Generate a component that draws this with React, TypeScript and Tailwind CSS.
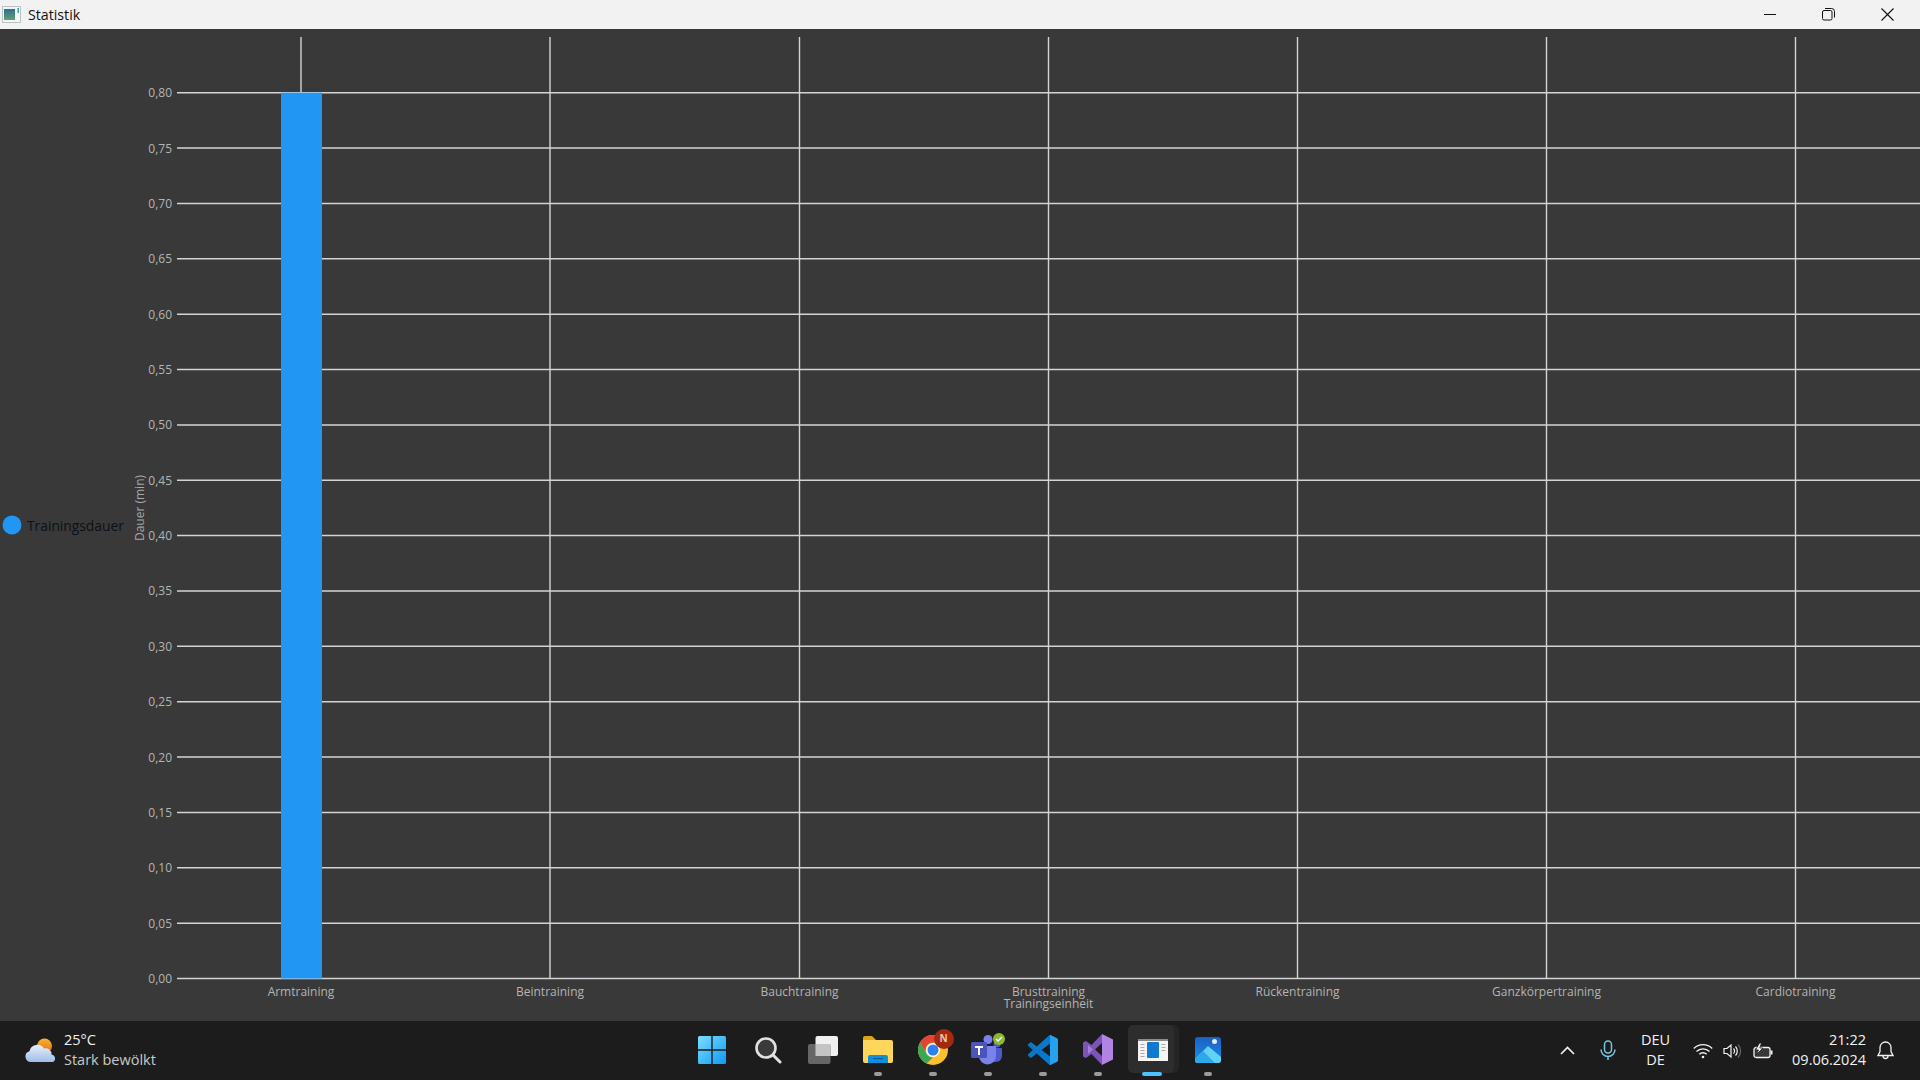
const font = "font-['Open_Sans','Noto_Sans',sans-serif]";

const ticks = ["0,00","0,05","0,10","0,15","0,20","0,25","0,30","0,35","0,40","0,45","0,50","0,55","0,60","0,65","0,70","0,75","0,80"];
const cats: [string, number][] = [["Armtraining",301],["Beintraining",550],["Bauchtraining",799.5],["Brusttraining",1048.5],["Rückentraining",1297.5],["Ganzkörpertraining",1546.5],["Cardiotraining",1795.5]];
const TOP = 29;
const y0 = 978.5 - TOP;
const step = 55.36;

function Chart() {
  return (
    <div className="relative flex-1 bg-[#393939]">
      <svg width="1920" height="992" className="block" style={{fontFamily:"'Open Sans'"}}>
        {cats.map(([, x]) => (
          <line key={x} x1={x} x2={x} y1={8} y2={y0} stroke="#d4d4d4" strokeWidth="1.4" />
        ))}
        {ticks.map((t, i) => {
          const y = y0 - i * step;
          return (
            <g key={t}>
              <line x1={177} x2={1920} y1={y} y2={y} stroke="#d4d4d4" strokeWidth="1.5" />
              <text x={172} y={y + 4.5} textAnchor="end" fontSize="12" fill="#b4b4b4">{t}</text>
            </g>
          );
        })}
        <rect x={281} y={y0 - 16 * step} width={41} height={16 * step} fill="#2196f3" />
        {cats.map(([c, x]) => (
          <text key={c} x={x} y={967} textAnchor="middle" fontSize="12" fill="#b4b4b4">{c}</text>
        ))}
        <text x={1048.5} y={979} textAnchor="middle" fontSize="12" fill="#b4b4b4">Trainingseinheit</text>
        <text transform="translate(144 479) rotate(-90)" textAnchor="middle" fontSize="12" fill="#a8a8a8">Dauer (min)</text>
        <circle cx={12} cy={496} r={9.5} fill="#2196f3" />
        <text x={27} y={502} fontSize="13.8" fill="#0c1117">Trainingsdauer</text>
      </svg>
    </div>
  );
}

function TitleBar() {
  return (
    <div className="flex h-[29px] items-center bg-[#f2f2f2] pl-[2px] pr-[3px]">
      <svg width="19" height="17" viewBox="0 0 19 17">
        <rect x="0.5" y="0.5" width="18" height="16" fill="#f4f6f6" stroke="#b9c3c8" />
        <defs>
          <linearGradient id="tb" x1="0" y1="0" x2="0" y2="1"><stop offset="0" stopColor="#2f6f8c" /><stop offset="1" stopColor="#5f9e74" /></linearGradient>
        </defs>
        <rect x="2" y="3" width="11" height="11" fill="url(#tb)" />
        <rect x="15.5" y="2" width="1.5" height="5" fill="#3aa0b0" />
      </svg>
      <span className={`ml-[7px] text-[14.2px] text-[#111] ${font}`}>Statistik</span>
      <div className="ml-auto flex">
        <div className="flex h-[29px] w-[58px] items-center justify-center">
          <svg width="12" height="2"><rect width="12" height="1" fill="#111" /></svg>
        </div>
        <div className="flex h-[29px] w-[59px] items-center justify-center">
          <svg width="13" height="13" viewBox="0 0 13 13" fill="none" stroke="#111" strokeWidth="1">
            <rect x="0.5" y="2.5" width="9.5" height="9.5" rx="1.5" />
            <path d="M3 .5h6.5A3 3 0 0 1 12.5 3.5V9.5" />
          </svg>
        </div>
        <div className="flex h-[29px] w-[59px] items-center justify-center">
          <svg width="13" height="13" viewBox="0 0 13 13" stroke="#111" strokeWidth="1.1"><path d="M.5.5l12 12M12.5.5l-12 12" /></svg>
        </div>
      </div>
    </div>
  );
}

function Slot({ children, dot, active }: { children: React.ReactNode; dot?: boolean; active?: boolean }) {
  return (
    <div className="relative flex h-[59px] w-[55px] items-center justify-center">
      {active && (
        <>
          <div className="absolute left-[8px] top-[4px] h-[48px] w-[46px] rounded-[5px] bg-[#252525]" />
          <div className="absolute left-[3px] top-[4px] h-[48px] w-[46px] rounded-[5px] bg-[#2d2d2d]" />
        </>
      )}
      <div className="relative -mt-[2px] flex">{children}</div>
      {dot && <div className="absolute bottom-[4px] left-[24px] h-[4px] w-[8px] rounded-full bg-[#9b9b9b]" />}
      {active && <div className="absolute bottom-[4px] left-[17px] h-[4px] w-[20px] rounded-full bg-[#4cc2ff]" />}
    </div>
  );
}

const Start = () => (
  <svg className="-ml-[2px]" width="30" height="30" viewBox="0 0 30 30">
    <defs>
      <linearGradient id="st" x1="0" y1="0" x2="1" y2="1"><stop offset="0" stopColor="#7fdcff" /><stop offset="1" stopColor="#0a9cf5" /></linearGradient>
    </defs>
    <path fill="url(#st)" d="M1 2.5A1.5 1.5 0 0 1 2.5 1H14.3V14.3H1ZM15.7 1H27.5A1.5 1.5 0 0 1 29 2.5V14.3H15.7ZM1 15.7H14.3V29H2.5A1.5 1.5 0 0 1 1 27.5ZM15.7 15.7H29V27.5A1.5 1.5 0 0 1 27.5 29H15.7Z" />
  </svg>
);
const Search = () => (
  <svg width="28" height="28" viewBox="0 0 28 28" fill="none">
    <circle cx="12" cy="12" r="9.5" fill="#3a3a3a" stroke="#dfe3e6" strokeWidth="2.6" />
    <path d="M19 19l7 7" stroke="#dfe3e6" strokeWidth="3" strokeLinecap="round" />
  </svg>
);
const TaskView = () => (
  <svg width="30" height="28" viewBox="0 0 30 28">
    <rect x="7.5" y="0" width="22.5" height="20" rx="2" fill="#f0f0f0" />
    <rect x="0" y="8" width="22.5" height="20" rx="2" fill="#6a6a6a" fillOpacity="0.95" />
    <rect x="7.5" y="8" width="15" height="12" fill="#c4c4c4" />
  </svg>
);
const Explorer = () => (
  <svg width="30" height="27" viewBox="0 0 30 27">
    <path d="M0 2a2 2 0 0 1 2-2h7l4 4h-13z" fill="#e0a40e" />
    <path d="M0 4h28a2 2 0 0 1 2 2v19a2 2 0 0 1-2 2H2a2 2 0 0 1-2-2z" fill="#ffd65c" />
    <path d="M5 27v-6a2 2 0 0 1 2-2h16a2 2 0 0 1 2 2v6z" fill="#0f8fdc" />
    <rect x="10" y="22" width="10" height="1.2" fill="#0a5a98" />
  </svg>
);
const Chrome = () => (
  <div className="relative h-[30px] w-[30px]">
    <svg width="30" height="30" viewBox="0 0 30 30">
      <circle cx="15" cy="15" r="15" fill="#fbc02d" />
      <path d="M15 0A15 15 0 0 1 28 7.5H15a7.5 7.5 0 0 0-6.5 11.2L2 7.5A15 15 0 0 1 15 0z" fill="#e54335" />
      <path d="M2 7.5L8.500 18.700A7.500 7.500 0 0 0 15 22.500L8.500 28.500A15 15 0 0 1 2 7.500z" fill="#3aa757" />
      <circle cx="15" cy="15" r="7" fill="#fff" />
      <circle cx="15" cy="15" r="5.500" fill="#2f7ff0" />
    </svg>
    <div className={`absolute left-[16px] -top-[6px] flex h-[20px] w-[20px] items-center justify-center rounded-full bg-[#a32a0c] text-[10px] font-bold text-[#f0c4b8] ${font}`}>N</div>
  </div>
);
const Teams = () => (
  <div className="relative h-[30px] w-[33px]">
    <svg width="33" height="30" viewBox="0 0 33 30">
      <circle cx="17" cy="4.500" r="4.500" fill="#7b83eb" />
      <circle cx="26" cy="9" r="3.500" fill="#5059c9" />
      <path d="M20 13h10a1 1 0 0 1 1 1v7a6 6 0 0 1-6 6h-5z" fill="#5059c9" />
      <path d="M8 11h17v10a8.500 8.500 0 0 1-17 0z" fill="#7b83eb" />
      <rect x="0" y="7" width="16" height="16" rx="1.500" fill="#4b53bc" />
      <path d="M4 11h8v2h-3v7h-2v-7h-3z" fill="#fff" />
    </svg>
    <div className="absolute left-[22px] -top-[2px] flex h-[12px] w-[12px] items-center justify-center rounded-full bg-[#8ab92d]">
      <svg width="8" height="8" viewBox="0 0 8 8" fill="none" stroke="#fff" strokeWidth="1.500"><path d="M1 4l2 2 4-4" /></svg>
    </div>
  </div>
);
const VSCode = () => (
  <svg width="30" height="30" viewBox="0 0 24 24">
    <defs>
      <clipPath id="vsr"><rect x="17.6" y="0" width="7" height="24" /></clipPath>
    </defs>
    <path fill="#0a78c8" d="M23.15 2.587L18.21.21a1.494 1.494 0 0 0-1.705.29l-9.46 8.63-4.12-3.128a.999.999 0 0 0-1.276.057L.327 7.261A1 1 0 0 0 .326 8.74L3.899 12 .326 15.26a1 1 0 0 0 .001 1.479L1.65 17.94a.999.999 0 0 0 1.276.057l4.12-3.128 9.46 8.63a1.492 1.492 0 0 0 1.704.29l4.942-2.377A1.5 1.5 0 0 0 24 20.06V3.939a1.5 1.5 0 0 0-.85-1.352zm-5.146 14.861L10.826 12l7.178-5.448v10.896z" />
    <path clipPath="url(#vsr)" fill="#24a2ef" d="M23.15 2.587L18.21.21a1.494 1.494 0 0 0-1.705.29l-.5.5V23l.5.5a1.492 1.492 0 0 0 1.704.29l4.942-2.377A1.5 1.5 0 0 0 24 20.06V3.939a1.5 1.5 0 0 0-.85-1.352z" />
  </svg>
);
const VS = () => (
  <svg width="30" height="31" viewBox="0 0 30 31">
    <path d="M19 0L30 5.500v20L19 31z" fill="#b184e4" />
    <path d="M19 0L8.500 11 3 7 0 8.500v14L3 24l5.500-4L19 31V22L12 15.500 19 9z" fill="#7c54b6" />
    <path d="M5 11l5 4.500L5 20z" fill="#a67ddc" />
  </svg>
);
const AppIcon = () => (
  <svg width="30" height="22" viewBox="0 0 30 22">
    <rect width="30" height="22" fill="#f4f4f4" />
    <rect width="30" height="2" fill="#8a8a8a" />
    <rect x="9" y="3" width="12" height="16" rx="1" fill="#0f78d0" />
    {[5, 8, 11, 14, 17].map((y) => <rect key={y} x="2.500" y={y} width="4" height="1" fill="#aaa" />)}
    {[5, 8, 11].map((y) => <rect key={y} x="23.500" y={y} width="4" height="1" fill="#aaa" />)}
  </svg>
);
const Photos = () => (
  <svg width="26" height="26" viewBox="0 0 26 26">
    <defs>
      <linearGradient id="ph" x1="0" y1="0" x2="0" y2="1"><stop offset="0" stopColor="#1d5fc4" /><stop offset="1" stopColor="#1a8fe8" /></linearGradient>
      <clipPath id="pc"><rect width="26" height="26" rx="3" /></clipPath>
    </defs>
    <g clipPath="url(#pc)">
      <rect width="26" height="26" fill="url(#ph)" />
      <path d="M0 22L13 9l13 11v6H0z" fill="#5fd3f5" />
      <path d="M0 26v-4L8 14l8 8 4 4z" fill="#2fa8e8" />
    </g>
    <circle cx="19.500" cy="4.500" r="2.500" fill="#e6eef8" />
  </svg>
);

function Tray() {
  return (
    <div className="flex flex-1 items-center">
      <svg className="ml-[325px]" width="15" height="9" viewBox="0 0 15 9" fill="none" stroke="#f2f2f2" strokeWidth="1.600"><path d="M1 8l6.500-6.500L14 8" /></svg>
      <svg className="ml-[25px]" width="16" height="21" viewBox="0 0 16 21" fill="none" stroke="#75c6e0" strokeWidth="1.500">
        <rect x="4.500" y="1" width="7" height="12" rx="3.500" />
        <path d="M1 9.500a7 7 0 0 0 14 0M8 16.500V20" />
      </svg>
      <div className={`-mt-[2px] ml-[17px] w-[45px] text-center text-[14.5px] leading-[20px] text-[#f2f2f2] ${font}`}>
        <div>DEU</div>
        <div>DE</div>
      </div>
      <svg className="ml-[15px]" width="20" height="16" viewBox="0 0 20 16" fill="none" stroke="#f2f2f2" strokeWidth="1.300">
        <path d="M.8 5.500a13 13 0 0 1 18.400 0M3.500 8.500a9.200 9.200 0 0 1 13 0M6.300 11.300a5.200 5.200 0 0 1 7.400 0" />
        <circle cx="10" cy="14" r="1.300" fill="#f2f2f2" stroke="none" />
      </svg>
      <svg className="ml-[10px]" width="19" height="16" viewBox="0 0 19 16" fill="none" stroke="#f2f2f2" strokeWidth="1.200">
        <path d="M1 5.500h3l4-3.500v12l-4-3.500H1z" />
        <path d="M10.500 5.500a3.500 3.500 0 0 1 0 5M12.500 3.500a6.500 6.500 0 0 1 0 9" />
        <path d="M15 1.500a9.500 9.500 0 0 1 0 13" stroke="#666" />
      </svg>
      <svg className="ml-[11px]" width="20" height="16" viewBox="0 0 20 16" fill="none" stroke="#f2f2f2" strokeWidth="1.300">
        <path d="M3 4.500h12a2 2 0 0 1 2 2v6a2 2 0 0 1-2 2H3a2 2 0 0 1-2-2v-6a2 2 0 0 1 2-2z" fill="#8a8a8a" fillOpacity="0.25" />
        <rect x="17.500" y="7.500" width="2" height="4" fill="#f2f2f2" stroke="none" />
        <path d="M6.500 0L2.500 7h3L3 12l7-7H6.800L8.500 0z" fill="#f2f2f2" stroke="#1c1c1c" strokeWidth="0.800" />
      </svg>
      <div className={`-mt-[2px] ml-[13px] w-[80px] text-right text-[14.5px] leading-[20px] text-[#f2f2f2] ${font}`}>
        <div>21:22</div>
        <div>09.06.2024</div>
      </div>
      <svg className="ml-[11px]" width="17" height="19" viewBox="0 0 17 19" fill="none" stroke="#f2f2f2" strokeWidth="1.300">
        <path d="M8.500 1a5.500 5.500 0 0 0-5.500 5.500v4L1 14.500h15l-2-4v-4A5.500 5.500 0 0 0 8.500 1zM6 15a2.500 2.500 0 0 0 5 0" />
      </svg>
    </div>
  );
}

function Taskbar() {
  return (
    <div className="flex h-[59px] bg-[#1c1c1c]">
      <div className="flex w-[685px] items-center pl-[23px]">
        <svg width="32" height="26" viewBox="0 0 32 26">
          <defs>
            <linearGradient id="cl" x1="0" y1="0" x2="0" y2="1"><stop offset="0" stopColor="#e8f0fb" /><stop offset="1" stopColor="#9dbde8" /></linearGradient>
            <linearGradient id="sn" x1="0" y1="0" x2="0" y2="1"><stop offset="0" stopColor="#f8b532" /><stop offset="1" stopColor="#e0681a" /></linearGradient>
          </defs>
          <circle cx="21.500" cy="8" r="7.500" fill="url(#sn)" />
          <path d="M6 25a5.500 5.500 0 0 1-1.500-10.800A8 8 0 0 1 19 11.500a6 6 0 0 1 7.500 6 4 4 0 0 1 1.500 7.500z" transform="translate(2 -1)" fill="url(#cl)" />
        </svg>
        <div className={`-mt-[2px] ml-[9px] text-[14.5px] leading-[20px] ${font}`}>
          <div className="text-[#f2f2f2]">25°C</div>
          <div className="text-[#c9c9c9]">Stark bewölkt</div>
        </div>
      </div>
      <div className="flex">
        <Slot><Start /></Slot>
        <Slot><Search /></Slot>
        <Slot><TaskView /></Slot>
        <Slot dot><Explorer /></Slot>
        <Slot dot><Chrome /></Slot>
        <Slot dot><Teams /></Slot>
        <Slot dot><VSCode /></Slot>
        <Slot dot><VS /></Slot>
        <Slot active><AppIcon /></Slot>
        <Slot dot><Photos /></Slot>
      </div>
      <Tray />
    </div>
  );
}

export default function App() {
  return (
    <div className="flex h-[1080px] w-[1920px] flex-col overflow-hidden">
      <TitleBar />
      <Chart />
      <Taskbar />
    </div>
  );
}
